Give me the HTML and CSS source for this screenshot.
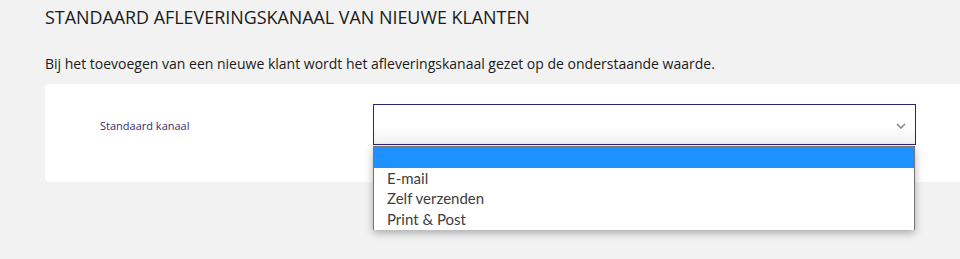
FILE: index.html
```html
<!DOCTYPE html>
<html lang="nl">
<head>
<meta charset="utf-8">
<link rel="stylesheet" href="styles.css">
</head>
<body>
<div class="page">
  <h2 class="title">STANDAARD AFLEVERINGSKANAAL VAN NIEUWE KLANTEN</h2>
  <p class="intro">Bij het toevoegen van een nieuwe klant wordt het afleveringskanaal gezet op de onderstaande waarde.</p>
  <div class="card">
    <div class="row">
      <label class="label">Standaard kanaal</label>
      <div class="select-wrap">
        <div class="select">
          <svg class="chevron" width="10" height="6" viewBox="0 0 10 6"><path d="M1 1 L5 5 L9 1" fill="none" stroke="#8a8a8a" stroke-width="1.6"/></svg>
        </div>
        <ul class="options">
          <li class="opt active">&nbsp;</li>
          <li class="opt">E-mail</li>
          <li class="opt">Zelf verzenden</li>
          <li class="opt">Print &amp; Post</li>
        </ul>
      </div>
    </div>
  </div>
</div>
</body>
</html>
```
FILE: styles.css
```css
html {
  background: #f2f2f2;
}
body {
  margin: 0;
  padding: 0;
  min-height: 259px;
  overflow: hidden;
  background: #f2f2f2;
  font-family: "Open Sans", "Liberation Sans", sans-serif;
}
.page {
  padding-left: 45px;
}
.title {
  margin: 0;
  padding-top: 5px;
  font-size: 17.9px;
  font-weight: 400;
  line-height: 24px;
  color: #1a1a1a;
}
.intro {
  margin: 25px 0 0 0;
  font-size: 14px;
  line-height: 20px;
  color: #1b1b1b;
}
.card {
  margin-top: 10px;
  margin-right: -20px;
  background: #fff;
  border-radius: 4px 0 0 4px;
  height: 98px;
  box-sizing: border-box;
  padding-top: 20px;
}
.row {
  display: flex;
  align-items: center;
}
.label {
  flex: 0 0 328px;
  box-sizing: border-box;
  padding-left: 55px;
  padding-top: 2px;
  font-size: 11px;
  color: #3b2d6b;
}
.select-wrap {
  position: relative;
  width: 543px;
}
.select {
  height: 41px;
  box-sizing: border-box;
  border: 1px solid #2e2470;
  background: linear-gradient(#ffffff 55%, #f1f1f1);
  position: relative;
}
.chevron {
  position: absolute;
  right: 9px;
  top: 18px;
}
.options {
  position: absolute;
  left: 0;
  top: 42px;
  width: 542px;
  margin: 0;
  padding: 0;
  list-style: none;
  background: #fff;
  border-left: 1px solid #767676;
  border-right: 1px solid #767676;
  border-top: 1px solid #767676;
  box-sizing: border-box;
  box-shadow: 0 3px 8px rgba(0,0,0,0.3);
  font-family: "Lato", "Open Sans", sans-serif;
  font-size: 15px;
  color: #3d3d3d;
}
.opt {
  height: 20.7px;
  line-height: 20px;
  padding-left: 13px;
}
.opt.active {
  background: #1e90ff;
}
```
